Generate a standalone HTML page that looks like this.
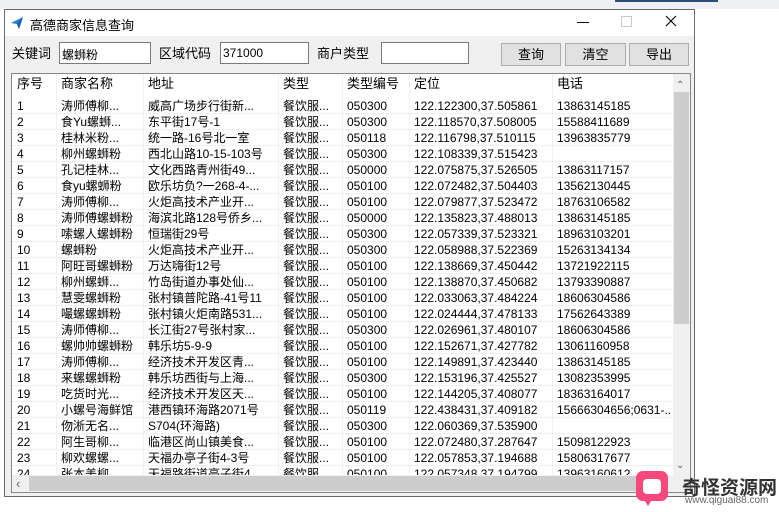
<!DOCTYPE html>
<html><head><meta charset="utf-8"><style>
*{margin:0;padding:0;box-sizing:border-box}
body{width:779px;height:512px;background:#fff;position:relative;overflow:hidden;font-family:"Liberation Sans","Noto Sans CJK SC","WenQuanYi Zen Hei",sans-serif;font-size:12px;color:#000}
.a{position:absolute}
.win{left:4px;top:9px;width:691px;height:488px;border:1px solid #6b6b6b;background:#f0f0f0}
.title{left:0;top:0;width:689px;height:26px;background:#fff}
.lbl{font-size:13px;top:33px}
.inp{top:32px;height:22px;background:#fff;border:1px solid #7a7a7a;font-size:12px;padding:3px 2px}
.btn{top:33px;height:23px;background:#e1e1e1;border:1px solid #adadad;text-align:center;line-height:21px;font-size:13px}
.tbl{left:6px;top:63px;width:680px;height:420px;border:1px solid #828790;background:#fff;overflow:hidden}
.row{position:absolute;left:0;height:16px;width:661px;border-bottom:1px solid #f0f0f0;white-space:nowrap}
.row span{position:absolute;top:1px;line-height:14px}
.hdr span{top:3px;font-size:13px}
.vl{position:absolute;top:0;width:1px;height:400px;background:#f0f0f0}
</style></head><body>
<div class="a" style="left:0;top:0;width:779px;height:9px;background:#eef0f3"></div>
<div class="a" style="left:615px;top:0;width:103px;height:2px;background:#2c5078"></div>
<div class="a win">
 <div class="a title">
  <svg class="a" style="left:5px;top:6px" width="14" height="14" viewBox="0 0 14 14"><path d="M1 7 L13 1 L9 13 L7 8 Z" fill="#2a7bd6"/><path d="M7 8 L13 1 L9 13Z" fill="#155ea8"/></svg>
  <div class="a" style="left:25px;top:5px;font-size:13px">高德商家信息查询</div>
  <div class="a" style="left:572px;top:12px;width:12px;height:1px;background:#000"></div>
  <div class="a" style="left:616px;top:6px;width:11px;height:11px;border:1px solid #c8c8c8"></div>
  <svg class="a" style="left:660px;top:5px" width="12" height="12"><path d="M1 1L11 11M11 1L1 11" stroke="#000" stroke-width="1.1"/></svg>
 </div>
 <div class="a lbl" style="left:7px">关键词</div>
 <div class="a inp" style="left:54px;width:92px">螺蛳粉</div>
 <div class="a lbl" style="left:154px">区域代码</div>
 <div class="a inp" style="left:215px;width:89px">371000</div>
 <div class="a lbl" style="left:312px">商户类型</div>
 <div class="a inp" style="left:376px;width:88px"></div>
 <div class="a btn" style="left:496px;width:60px">查询</div>
 <div class="a btn" style="left:560px;width:61px">清空</div>
 <div class="a btn" style="left:624px;width:60px">导出</div>
 <div class="a tbl" id="t">
  <div class="vl" style="left:44px"></div><div class="vl" style="left:131px"></div><div class="vl" style="left:266px"></div><div class="vl" style="left:330px"></div><div class="vl" style="left:397px"></div><div class="vl" style="left:540px"></div>
  <div class="row hdr" style="top:0;height:23px;border-bottom:none"><span style="left:5px">序号</span><span style="left:49px">商家名称</span><span style="left:136px">地址</span><span style="left:271px">类型</span><span style="left:335px">类型编号</span><span style="left:402px">定位</span><span style="left:545px">电话</span></div>
  <div id="rows"></div>
  <div class="a" style="left:661px;top:0;width:17px;height:401px;background:#f0f0f0"></div>
  <div class="a" style="left:664px;top:6px;font-size:10px;color:#606060">&#8963;</div>
  <div class="a" style="left:662px;top:18px;width:15px;height:232px;background:#cdcdcd"></div>
  <div class="a" style="left:664px;top:386px;font-size:10px;color:#606060">&#8964;</div>
  <div class="a" style="left:0;top:401px;width:678px;height:17px;background:#f0f0f0"></div>
  <div class="a" style="left:4px;top:402px;font-size:13px;color:#606060">&lsaquo;</div>
  <div class="a" style="left:17px;top:402px;width:638px;height:15px;background:#cdcdcd"></div>
 </div>
</div>
<div class="a" style="left:636px;top:471px;width:32px;height:30px;background:#f5497d;border-radius:7px"></div>
<div class="a" style="left:643px;top:498px;width:0;height:0;border-left:5px solid transparent;border-right:5px solid transparent;border-top:8px solid #f5497d"></div>
<div class="a" style="left:643px;top:479px;width:18px;height:15px;background:#fff;border-radius:4px"></div>
<div class="a" style="left:682px;top:473px;font-size:19px;font-weight:bold;color:#333;letter-spacing:0px">奇怪资源网</div>
<div class="a" style="left:685px;top:495px;font-size:10px;color:#666">www.qiguai88.com</div>
<script>
var d=[["1","涛师傅柳...","威高广场步行街新...","050300","122.122300,37.505861","13863145185"],
["2","食Yu螺蛳...","东平街17号-1","050300","122.118570,37.508005","15588411689"],
["3","桂林米粉...","统一路-16号北一室","050118","122.116798,37.510115","13963835779"],
["4","柳州螺蛳粉","西北山路10-15-103号","050300","122.108339,37.515423",""],
["5","孔记桂林...","文化西路青州街49...","050000","122.075875,37.526505","13863117157"],
["6","食yu螺蛳粉","欧乐坊负?一268-4-...","050100","122.072482,37.504403","13562130445"],
["7","涛师傅柳...","火炬高技术产业开...","050100","122.079877,37.523472","18763106582"],
["8","涛师傅螺蛳粉","海滨北路128号侨乡...","050000","122.135823,37.488013","13863145185"],
["9","嗦螺人螺蛳粉","恒瑞街29号","050300","122.057339,37.523321","18963103201"],
["10","螺蛳粉","火炬高技术产业开...","050300","122.058988,37.522369","15263134134"],
["11","阿旺哥螺蛳粉","万达嗨街12号","050100","122.138669,37.450442","13721922115"],
["12","柳州螺蛳...","竹岛街道办事处仙...","050100","122.138870,37.450682","13793390887"],
["13","慧雯螺蛳粉","张村镇普陀路-41号11","050100","122.033063,37.484224","18606304586"],
["14","嘬螺螺蛳粉","张村镇火炬南路531...","050100","122.024444,37.478133","17562643389"],
["15","涛师傅柳...","长江街27号张村家...","050300","122.026961,37.480107","18606304586"],
["16","螺帅帅螺蛳粉","韩乐坊5-9-9","050100","122.152671,37.427782","13061160958"],
["17","涛师傅柳...","经济技术开发区青...","050100","122.149891,37.423440","13863145185"],
["18","来螺螺蛳粉","韩乐坊西街与上海...","050300","122.153196,37.425527","13082353995"],
["19","吃货时光...","经济技术开发区天...","050100","122.144205,37.408077","18363164017"],
["20","小螺号海鲜馆","港西镇环海路2071号","050119","122.438431,37.409182","15666304656;0631-.."],
["21","伆淅无名...","S704(环海路)","050300","122.060369,37.535900",""],
["22","阿生哥柳...","临港区尚山镇美食...","050100","122.072480,37.287647","15098122923"],
["23","柳欢螺螺...","天福办亭子街4-3号","050100","122.057853,37.194688","15806317677"],
["24","张本美柳...","天福路街道亭子街4","050100","122.057348,37.194799","13963160612"]];
var h="";d.forEach(function(r,i){h+='<div class="row" style="top:'+(24+i*16)+'px"><span style="left:5px">'+r[0]+'</span><span style="left:49px">'+r[1]+'</span><span style="left:136px">'+r[2]+'</span><span style="left:271px">餐饮服...</span><span style="left:335px">'+r[3]+'</span><span style="left:402px">'+r[4]+'</span><span style="left:545px">'+r[5]+'</span></div>'});
document.getElementById("rows").innerHTML=h;
</script>
</body></html>
